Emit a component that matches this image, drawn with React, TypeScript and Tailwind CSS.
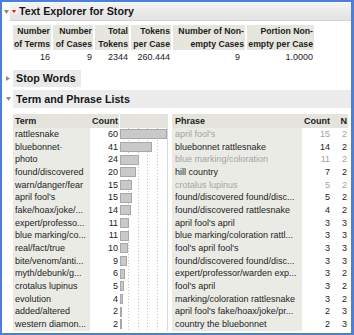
import React from "react";

const terms: [string, number][] = [
  ["rattlesnake", 60],
  ["bluebonnet·", 41],
  ["photo", 24],
  ["found/discovered", 20],
  ["warn/danger/fear", 15],
  ["april fool's", 15],
  ["fake/hoax/joke/...", 14],
  ["expert/professo...", 11],
  ["blue marking/co...", 11],
  ["real/fact/true", 10],
  ["bite/venom/anti...", 9],
  ["myth/debunk/g...", 6],
  ["crotalus lupinus", 5],
  ["evolution", 4],
  ["added/altered", 2],
  ["western diamon...", 2],
];

const phrases: [string, number, number, boolean][] = [
  ["april fool's", 15, 2, true],
  ["bluebonnet rattlesnake", 14, 2, false],
  ["blue marking/coloration", 11, 2, true],
  ["hill country", 7, 2, false],
  ["crotalus lupinus", 5, 2, true],
  ["found/discovered found/disc...", 5, 2, false],
  ["found/discovered rattlesnake", 4, 2, false],
  ["april fool's april", 3, 3, false],
  ["blue marking/coloration rattl...", 3, 3, false],
  ["fool's april fool's", 3, 3, false],
  ["found/discovered found/disc...", 3, 3, false],
  ["expert/professor/warden exp...", 3, 2, false],
  ["fool's april", 3, 2, false],
  ["marking/coloration rattlesnake", 3, 2, false],
  ["april fool's fake/hoax/joke/pr...", 2, 3, false],
  ["country the bluebonnet", 2, 3, false],
];

const stats: [string, string, string, number, number][] = [
  ["Number", "of Terms", "16", 38, 1],
  ["Number", "of Cases", "9", 40, 1],
  ["Total", "Tokens", "2344", 34, 1],
  ["Tokens", "per Case", "260.444", 40, 1],
  ["Number of Non-", "empty Cases", "9", 72, 5],
  ["Portion Non-", "empty per Case", "1.0000", 67, 1],
];

function TriDown() {
  return (
    <svg width="5" height="4" viewBox="0 0 5 4">
      <polygon points="0,0 5,0 2.5,4" fill="#8a8a8a" />
    </svg>
  );
}
function TriRight() {
  return (
    <svg width="4" height="5" viewBox="0 0 4 5">
      <polygon points="0,0 4,2.5 0,5" fill="#8a8a8a" />
    </svg>
  );
}

const ROW = "h-[12.67px] leading-[12.67px]";

export default function App() {
  return (
    <div className="w-[354px] h-[335px] overflow-hidden bg-white border-t-2 border-l-2 border-b-2 border-r-[3px] border-[#4d7fd4] font-['Liberation_Sans',Arial,sans-serif] text-[#1c1c1c]">
      {/* Title */}
      <div className="flex items-center h-[18px] mt-px">
        <div className="w-[8px] flex justify-center pl-px">
          <TriDown />
        </div>
        <div className="flex-1 h-[18px] flex items-center bg-gradient-to-b from-[#f3f3f3] to-[#e2e2e2] border-b border-[#d4d4d4]">
          <div className="ml-px w-[6px] h-[5px] flex items-center justify-center">
            <svg width="6" height="5" viewBox="0 0 6 5">
              <rect x="0" y="0" width="6" height="5" fill="#f4f4f4" />
              <polygon points="0.8,1 5.2,1 3,4.2" fill="#e0262e" />
            </svg>
          </div>
          <span className="ml-[2px] text-[10.7px] font-bold text-[#151515]">Text Explorer for Story</span>
        </div>
      </div>

      {/* Stats */}
      <div className="mt-[4px] ml-[11px] flex gap-[2px]">
        {stats.map(([a, b, v, w, pr], i) => (
          <div key={i} className="flex flex-col" style={{ width: w }}>
            <div className="bg-[#e6e6df] h-[25px] text-[8.7px] font-bold leading-[12.5px] flex flex-col items-end pr-px whitespace-nowrap">
              <div>{a}</div>
              <div>{b}</div>
            </div>
            <div className="mt-[2px] h-[11px] text-[9px] leading-[11px] flex justify-end whitespace-nowrap" style={{ paddingRight: pr }}>
              {v}
            </div>
          </div>
        ))}
      </div>

      {/* Stop Words */}
      <div className="mt-[7px] flex items-center h-[17px]">
        <div className="w-[11px] flex justify-end pr-[3px]">
          <TriRight />
        </div>
        <div className="w-[68px] h-[17px] bg-[#e9e9e9] flex items-center pl-[3px] text-[10.7px] font-bold text-[#151515]">
          Stop Words
        </div>
      </div>

      {/* Term and Phrase Lists */}
      <div className="mt-[3px] flex items-center h-[18px]">
        <div className="w-[11px] flex justify-end pr-[2px]">
          <TriDown />
        </div>
        <div className="flex-1 h-[18px] bg-[#ececec] flex items-center pl-[3px] text-[10.7px] font-bold text-[#151515]">
          Term and Phrase Lists
        </div>
      </div>

      {/* Tables */}
      <div className="mt-[6px] ml-[11px] flex text-[9px]">
        {/* Term */}
        <div className="w-[77px] flex flex-col">
          <div className="h-[14px] leading-[14px] bg-[#e4e4dd] font-bold pl-[2px]">Term</div>
          {terms.map(([t], i) => (
            <div key={i} className={`${ROW} bg-[#ebebe5] pl-[2px] whitespace-nowrap overflow-hidden`}>
              {t}
            </div>
          ))}
        </div>
        {/* Count */}
        <div className="w-[29px] flex flex-col">
          <div className="h-[14px] leading-[14px] bg-[#e4e4dd] font-bold text-right pr-px">Count</div>
          {terms.map(([, c], i) => (
            <div key={i} className={`${ROW} text-right pr-px`}>
              {c}
            </div>
          ))}
        </div>
        {/* Bars */}
        <div className="w-[48px] ml-px flex flex-col">
          <div className="h-[14px] bg-[#e4e4dd]" />
          <div className="relative border-r border-[#d8d8d8]">
            <svg className="absolute inset-0" width="48" height="203" viewBox="0 0 48 203">
              {[8, 18, 27, 37].map((x) => (
                <line key={x} x1={x + 0.5} y1="0" x2={x + 0.5} y2="203" stroke="#c4c4c4" strokeWidth="1" strokeDasharray="1 2" />
              ))}
            </svg>
            {terms.map(([, c], i) => (
              <div key={i} className="h-[12.67px] flex items-center relative">
                <div
                  className="h-[10px] bg-[#c9c9c9] border border-[#a8a8a8]"
                  style={{ width: Math.max(2, Math.round((c / 60) * 47)) }}
                />
              </div>
            ))}
          </div>
        </div>
        {/* Phrase */}
        <div className="w-[130px] ml-[4px] flex flex-col">
          <div className="h-[14px] leading-[14px] bg-[#e4e4dd] font-bold pl-[3px]">Phrase</div>
          {phrases.map(([p, , , g], i) => (
            <div key={i} className={`${ROW} bg-[#ebebe5] pl-[3px] whitespace-nowrap overflow-hidden ${g ? "text-[#a3a3a3]" : ""}`}>
              {p}
            </div>
          ))}
        </div>
        <div className="w-[29px] flex flex-col">
          <div className="h-[14px] leading-[14px] bg-[#e4e4dd] font-bold text-right pr-px">Count</div>
          {phrases.map(([, c, , g], i) => (
            <div key={i} className={`${ROW} text-right pr-px ${g ? "text-[#a3a3a3]" : ""}`}>
              {c}
            </div>
          ))}
        </div>
        <div className="w-[17px] flex flex-col">
          <div className="h-[14px] leading-[14px] bg-[#e4e4dd] font-bold text-right pr-px">N</div>
          {phrases.map(([, , n, g], i) => (
            <div key={i} className={`${ROW} text-right pr-px ${g ? "text-[#a3a3a3]" : ""}`}>
              {n}
            </div>
          ))}
        </div>
      </div>
    </div>
  );
}
